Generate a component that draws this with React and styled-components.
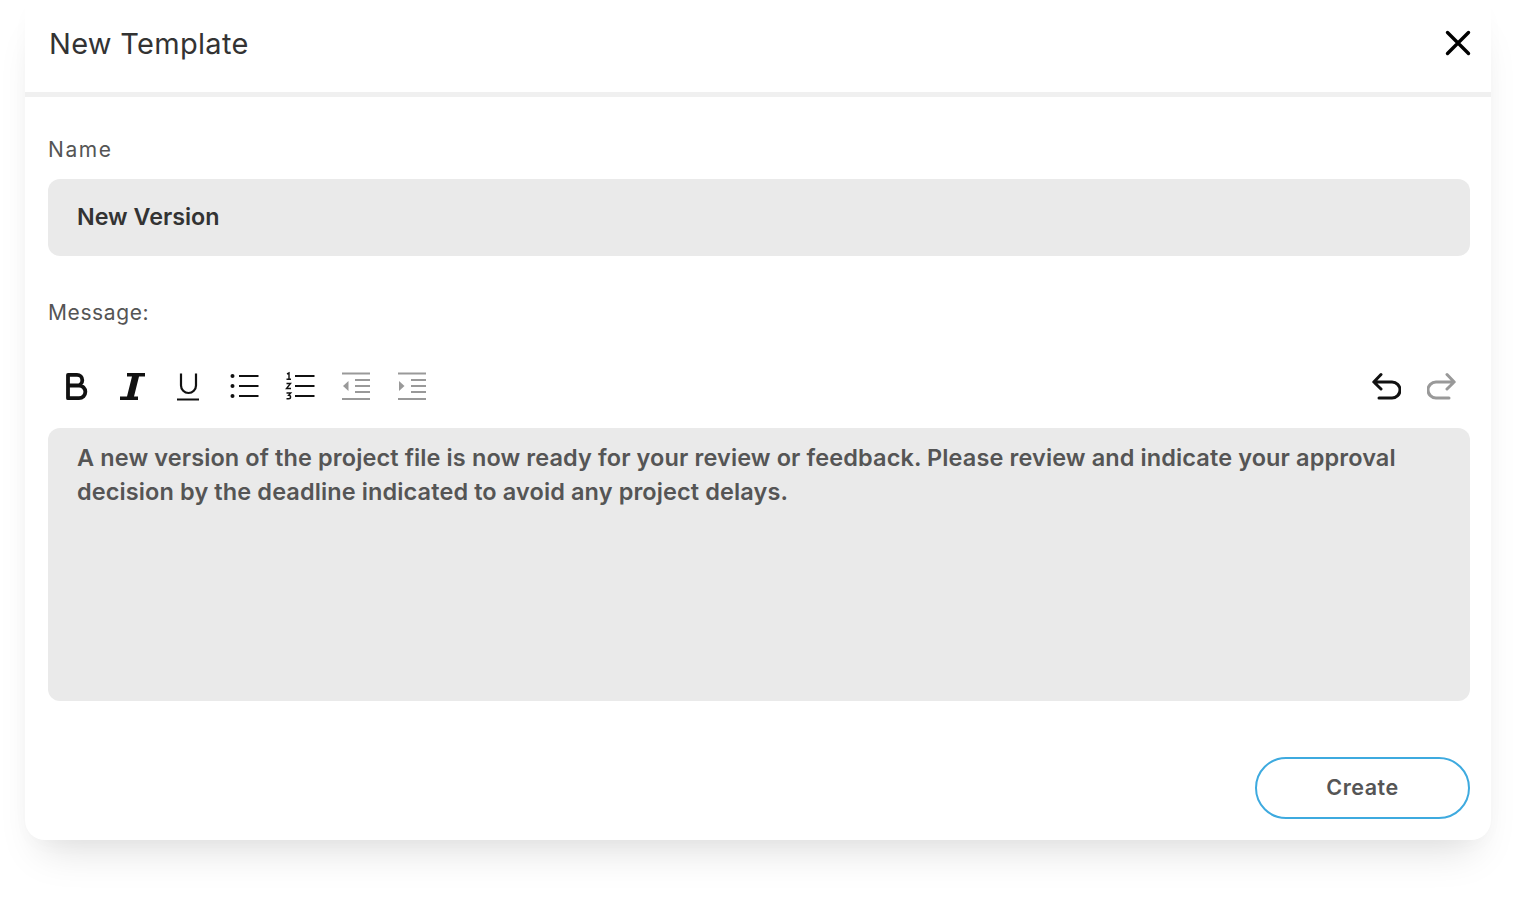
import React from 'react';
import styled, { createGlobalStyle } from 'styled-components';

const GlobalStyle = createGlobalStyle`
  html, body {
    margin: 0;
    background: #fff;
    font-family: "Inter", "Liberation Sans", sans-serif;
  }
  body { overflow: hidden; }
`;

const Page = styled.div`
  width: 1536px;
  height: 905px;
  padding-left: 25px;
  box-sizing: border-box;
`;

const Modal = styled.div`
  width: 1466px;
  height: 840px;
  background: #fff;
  border-radius: 0 0 20px 20px;
  box-shadow: 0 26px 42px -16px rgba(0, 0, 0, 0.13), 0 6px 24px -6px rgba(0, 0, 0, 0.03);
`;

const Header = styled.div`
  height: 86px;
  padding: 0 18px 6px 24px;
  display: flex;
  align-items: center;
  justify-content: space-between;
  border-bottom: 5px solid #f0f0f0;
`;

const Title = styled.h1`
  margin: 0;
  font-size: 29px;
  font-weight: 400;
  color: #333;
  letter-spacing: 0.3px;
`;

const Body = styled.div`
  padding: 41px 21px 21px 23px;
`;

const Label = styled.div`
  height: 24px;
  line-height: 24px;
  font-size: 21px;
  letter-spacing: ${p => p.$spacing || 0.6}px;
  color: #555;
  margin-top: ${p => p.$top || 0}px;
`;

const NameInput = styled.div`
  height: 77px;
  margin-top: 17px;
  padding: 0 29px 2px;
  box-sizing: border-box;
  display: flex;
  align-items: center;
  background: #eaeaea;
  border-radius: 12px;
  font-size: 23.3px;
  font-weight: 600;
  color: #333;
`;

const Toolbar = styled.div`
  height: 44px;
  margin-top: 39px;
  display: flex;
  justify-content: space-between;
`;

const ToolGroup = styled.div`
  display: flex;
`;

const ToolButton = styled.button`
  width: 56px;
  height: 44px;
  padding: 0;
  border: 0;
  background: none;
  display: flex;
  align-items: center;
  justify-content: center;
  color: ${p => (p.$muted ? '#999' : '#111')};
`;

const Editor = styled.div`
  height: 273px;
  margin-top: 20px;
  padding: 13px 29px;
  box-sizing: border-box;
  background: #eaeaea;
  border-radius: 12px;
  font-size: 23.5px;
  font-weight: 600;
  line-height: 34px;
  letter-spacing: 0.11px;
  color: #555;
`;

const Footer = styled.div`
  margin-top: 56px;
  display: flex;
  justify-content: flex-end;
`;

const CreateButton = styled.button`
  width: 215px;
  height: 62px;
  padding: 0 0 2px;
  border: 2px solid #3eaadf;
  border-radius: 31px;
  background: #fff;
  font-family: inherit;
  font-size: 21.5px;
  font-weight: 600;
  letter-spacing: 0.5px;
  color: #555;
`;

const CloseButton = styled.button`
  width: 30px;
  height: 30px;
  padding: 0;
  border: 0;
  background: none;
  display: flex;
`;

const Icon = ({ children }) => (
  <svg width="30" height="30" viewBox="0 0 30 30" fill="none" stroke="currentColor" strokeWidth="2">
    {children}
  </svg>
);

const BoldIcon = () => (
  <Icon>
    <path strokeWidth="3.8" strokeLinejoin="round" d="M7 3.900h9a5 5 0 0 1 0 10.600H7zM7 14.500h11a6.300 6.300 0 0 1 0 12.700H7z" />
  </Icon>
);

const ItalicIcon = () => (
  <Icon>
    <path fill="currentColor" stroke="none" d="M10 2h18v3.600h-6l-5 19.800h4v3.600H3v-3.600h7l5-19.800h-5z" />
  </Icon>
);

const UnderlineIcon = () => (
  <Icon>
    <path strokeWidth="2.200" d="M8 2.500v12a7.500 7.500 0 0 0 15 0v-12" />
    <path d="M4 28.500h22" />
  </Icon>
);

const BulletIcon = () => (
  <Icon>
    <circle cx="3.500" cy="5" r="2" fill="currentColor" stroke="none" />
    <circle cx="3.500" cy="15" r="2" fill="currentColor" stroke="none" />
    <circle cx="3.500" cy="25" r="2" fill="currentColor" stroke="none" />
    <path d="M10 5h19.500M10 15h19.500M10 25h19.500" />
  </Icon>
);

const NumberIcon = () => (
  <Icon>
    <path strokeWidth="1.400" d="M2 3l2-1v6M1.500 8.200h4.500M1.500 12.500h4l-4 5h4.500M1.500 22h4.200l-2 2.200c2.500 0 2.500 3.600 0 3.600H1.500" />
    <path d="M10 5h19.500M10 15h19.500M10 25h19.500" />
  </Icon>
);

const OutdentIcon = () => (
  <Icon>
    <path d="M1 2.500h28M14 9h15M14 15h15M14 21h15M1 28h28" />
    <path fill="currentColor" stroke="none" d="M7.500 10v10L2 15z" />
  </Icon>
);

const IndentIcon = () => (
  <Icon>
    <path d="M1 2.500h28M14 9h15M14 15h15M14 21h15M1 28h28" />
    <path fill="currentColor" stroke="none" d="M2 10v10l5.500-5z" />
  </Icon>
);

const UndoIcon = () => (
  <Icon>
    <path strokeWidth="3" strokeLinecap="round" strokeLinejoin="round" d="M10 3.500L2.800 11l7.200 7M3 11h18a8 8 0 0 1 0 16H8" />
  </Icon>
);

const RedoIcon = () => (
  <Icon>
    <path strokeWidth="3" strokeLinecap="round" strokeLinejoin="round" d="M20 3.500l7.200 7.500-7.200 7M27 11H9a8 8 0 0 0 0 16h13" />
  </Icon>
);

const CloseIcon = () => (
  <Icon>
    <path strokeWidth="3.400" strokeLinecap="round" d="M4.500 4.500l21 21M25.500 4.500l-21 21" />
  </Icon>
);

export default function App() {
  return (
    <Page>
      <GlobalStyle />
      <Modal>
        <Header>
          <Title>New Template</Title>
          <CloseButton><CloseIcon /></CloseButton>
        </Header>
        <Body>
          <Label $spacing={1.6}>Name</Label>
          <NameInput>New Version</NameInput>
          <Label $top={45}>Message:</Label>
          <Toolbar>
            <ToolGroup>
              <ToolButton><BoldIcon /></ToolButton>
              <ToolButton><ItalicIcon /></ToolButton>
              <ToolButton><UnderlineIcon /></ToolButton>
              <ToolButton><BulletIcon /></ToolButton>
              <ToolButton><NumberIcon /></ToolButton>
              <ToolButton $muted><OutdentIcon /></ToolButton>
              <ToolButton $muted><IndentIcon /></ToolButton>
            </ToolGroup>
            <ToolGroup>
              <ToolButton><UndoIcon /></ToolButton>
              <ToolButton $muted><RedoIcon /></ToolButton>
            </ToolGroup>
          </Toolbar>
          <Editor>
            A new version of the project file is now ready for your review or feedback. Please review and indicate your approval decision by the deadline indicated to avoid any project delays.
          </Editor>
          <Footer>
            <CreateButton>Create</CreateButton>
          </Footer>
        </Body>
      </Modal>
    </Page>
  );
}
